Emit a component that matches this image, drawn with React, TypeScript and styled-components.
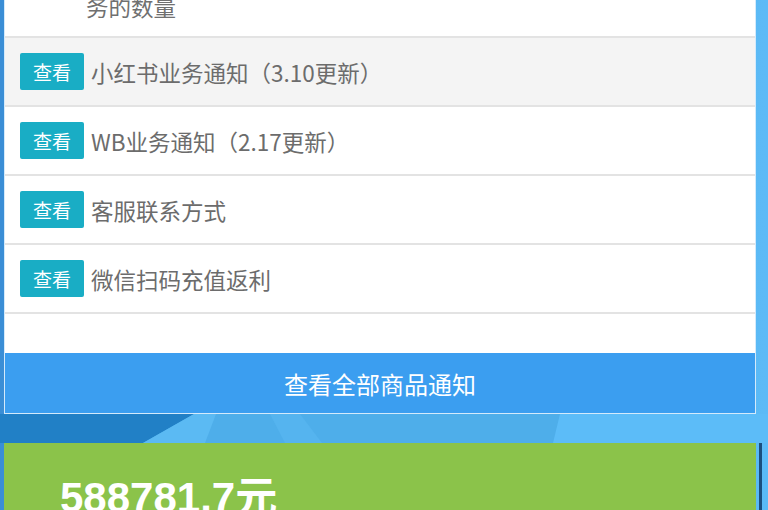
import React from 'react';
import styled, { createGlobalStyle } from 'styled-components';

const GlobalStyle = createGlobalStyle`
  html, body {
    margin: 0;
    padding: 0;
    background: #4eaeea;
  }
  body {
    font-family: "Noto Sans CJK SC", "Noto Sans", sans-serif;
    overflow: hidden;
  }
`;

const Page = styled.div`
  width: 768px;
  height: 510px;
  overflow: hidden;
  padding-left: 4px;
  box-sizing: border-box;
  background: linear-gradient(90deg, #3a8ed6 0, #3a8ed6 4px, #4eaeea 40%, #5bbaf6 100%);
`;

const Panel = styled.div`
  width: 752px;
  margin-top: -20px;
  background: #fff;
  border: 1px solid #d4eafb;
  box-sizing: border-box;
  display: flex;
  flex-direction: column;
`;

const Row = styled.div<{ $shade?: boolean }>`
  display: flex;
  align-items: center;
  height: 67px;
  padding: 0 15px;
  background: ${(p) => (p.$shade ? '#f4f4f4' : '#fff')};
  border-bottom: 2px solid #e3e3e3;
`;

const TailRow = styled.div`
  padding: 10px 0 15px 81px;
  line-height: 30px;
  font-size: 22.5px;
  color: #707070;
  border-bottom: 2px solid #e3e3e3;
`;

const ViewTag = styled.span`
  display: inline-flex;
  align-items: center;
  justify-content: center;
  width: 64px;
  height: 37px;
  margin-right: 7px;
  background: #19adc5;
  color: #fff;
  font-size: 19px;
  border-radius: 2px;
  flex-shrink: 0;
`;

const Title = styled.span`
  font-size: 22.5px;
  color: #6c6c6c;
  white-space: nowrap;
`;

const Spacer = styled.div`
  height: 39px;
`;

const AllButton = styled.div`
  height: 60px;
  display: flex;
  align-items: center;
  justify-content: center;
  background: #3b9ef0;
  color: #fff;
  font-size: 24px;
`;

const Band = styled.svg`
  display: block;
  width: 768px;
  height: 29px;
  margin-left: -4px;
`;

const BottomRow = styled.div`
  display: flex;
  gap: 3px;
`;

const Card = styled.div`
  width: 752px;
  height: 120px;
  flex-shrink: 0;
  box-sizing: border-box;
  padding: 34px 0 0 56px;
  background: #8bc34a;
`;

const Amount = styled.div`
  font-family: "Liberation Sans", "Noto Sans CJK SC", sans-serif;
  font-weight: bold;
  font-size: 42px;
  line-height: 42px;
  color: #fff;
`;

const Edge = styled.div`
  width: 3px;
  height: 120px;
  background: #1b4e7e;
`;

const notices = [
  { title: '小红书业务通知（3.10更新）', shade: true },
  { title: 'WB业务通知（2.17更新）' },
  { title: '客服联系方式' },
  { title: '微信扫码充值返利' },
];

export default function App() {
  return (
    <>
      <GlobalStyle />
      <Page>
        <Panel>
          <TailRow>务的数量</TailRow>
          {notices.map((n) => (
            <Row key={n.title} $shade={n.shade}>
              <ViewTag>查看</ViewTag>
              <Title>{n.title}</Title>
            </Row>
          ))}
          <Spacer />
          <AllButton>查看全部商品通知</AllButton>
        </Panel>
        <Band viewBox="0 0 768 29" preserveAspectRatio="none">
          <rect x="0" y="0" width="768" height="29" fill="#4eaeea" />
          <polygon points="0,0 194,0 143,29 0,29" fill="#2180c6" />
          <polygon points="194,0 216,0 205,29 143,29" fill="#5bbaf3" />
          <polygon points="270,0 300,0 322,29 285,29" fill="#55b4ef" />
          <polygon points="560,0 768,0 768,29 553,29" fill="#5cbcf8" />
        </Band>
        <BottomRow>
          <Card>
            <Amount>588781.7元</Amount>
          </Card>
          <Edge />
        </BottomRow>
      </Page>
    </>
  );
}
